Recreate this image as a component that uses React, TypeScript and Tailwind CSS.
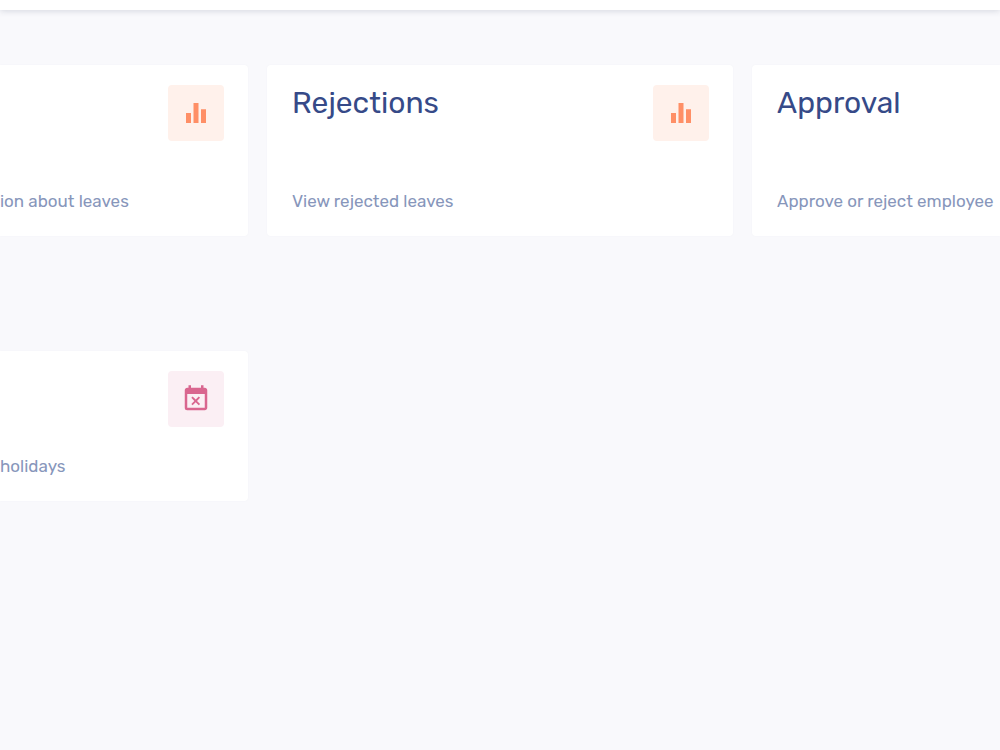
import type { IconType } from "react-icons";
import { MdEqualizer, MdEventBusy } from "react-icons/md";

interface LeaveCardProps {
  title?: string;
  description: string;
  icon?: IconType;
  tone?: "orange" | "pink";
  size?: "regular" | "compact";
  edge?: "left" | "right" | "none";
}

const LeaveCard = ({
  title,
  description,
  icon: Icon,
  tone = "orange",
  size = "regular",
  edge = "none",
}: LeaveCardProps) => {
  const height = size === "regular" ? "min-h-[171px]" : "min-h-[150px]";
  const shape = {
    left: "pr-6 rounded-r-sm",
    right: "pl-[25px] rounded-l-sm",
    none: "pl-[25px] pr-6 rounded-sm",
  }[edge];
  const badge =
    tone === "orange" ? "bg-[#fff1eb] text-[#ff8f66]" : "bg-[#fbeff4] text-[#d9668f]";

  return (
    <article
      className={`flex min-w-0 flex-col justify-between bg-white pt-5 pb-6 shadow-[0_0_2px_rgba(60,70,130,0.04)] ${height} ${shape}`}
    >
      <div className="flex items-start justify-between">
        <h2 className="text-[30px] leading-9 text-[#364a88]">{title}</h2>
        {Icon && (
          <div className={`ml-auto flex size-14 shrink-0 items-center justify-center rounded ${badge}`}>
            <Icon size={30} />
          </div>
        )}
      </div>
      <p className="text-[17px] leading-[22px] whitespace-nowrap text-[#8796bb]">{description}</p>
    </article>
  );
};

export default function App() {
  return (
    <div className="min-h-screen overflow-x-hidden bg-[#f9f9fc] font-['Rubik','Roboto',sans-serif]">
      <header className="h-[10px] bg-white shadow-[0_1px_6px_rgba(50,60,90,0.18)]" />
      <main className="pt-[55px]">
        <section className="grid grid-cols-[25fr_47fr_25fr] gap-[19px]">
          <LeaveCard description="ion about leaves" icon={MdEqualizer} edge="left" />
          <LeaveCard title="Rejections" description="View rejected leaves" icon={MdEqualizer} />
          <LeaveCard title="Approval" description="Approve or reject employee" edge="right" />
        </section>
        <section className="mt-[115px] grid grid-cols-[25fr_47fr_25fr] gap-[19px]">
          <LeaveCard
            description="holidays"
            icon={MdEventBusy}
            tone="pink"
            size="compact"
            edge="left"
          />
        </section>
      </main>
    </div>
  );
}
